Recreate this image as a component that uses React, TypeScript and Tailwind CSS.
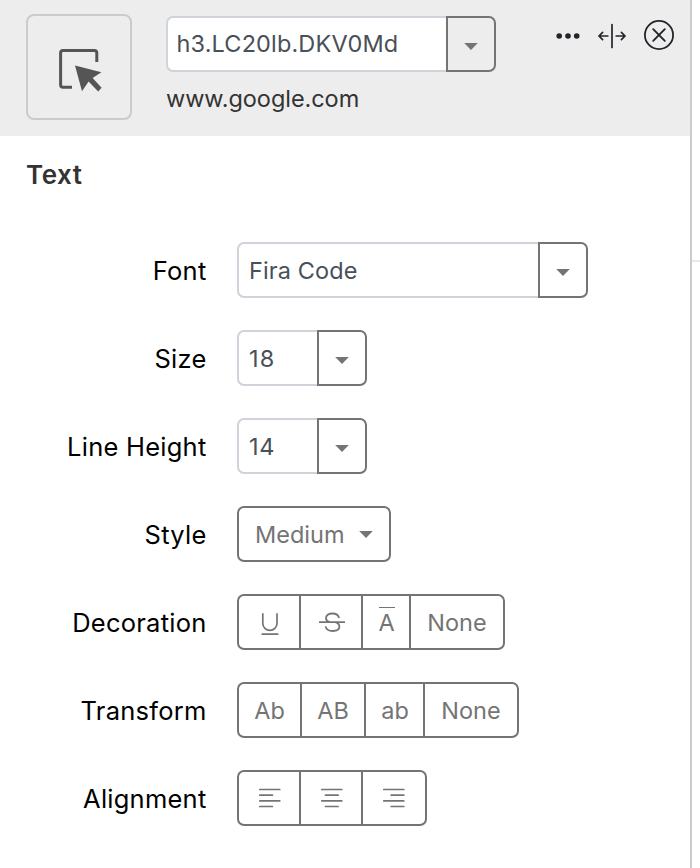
import type { ReactNode } from "react";

function Caret() {
  return (
    <svg width="14" height="7" viewBox="0 0 14 7" className="block shrink-0" fill="#747474">
      <path d="M0.2 0H13.8L7 7Z" />
    </svg>
  );
}

function Combo({ value, width, text }: { value: string; width: string; text: string }) {
  return (
    <div className="flex h-14">
      <div
        className={`flex items-center rounded-l-[7px] border-2 border-r-0 border-[#ced4da] bg-white text-[23.5px] text-[#495057] ${width} ${text}`}
      >
        {value}
      </div>
      <button className="flex w-[50px] items-center justify-center rounded-r-[7px] border-2 border-[#747474] pt-[5px]">
        <Caret />
      </button>
    </div>
  );
}

function Row({ label, children }: { label: string; children: ReactNode }) {
  return (
    <div className="flex h-14 items-center">
      <div className="w-[206.5px] pt-px text-right text-[25.5px] tracking-[0.24px] text-black">{label}</div>
      <div className="ml-[30.5px] flex">{children}</div>
    </div>
  );
}

function Group({ children }: { children: ReactNode }) {
  return (
    <div className="flex h-14 divide-x-2 divide-[#747474] overflow-hidden rounded-[7px] border-2 border-[#747474] text-[23.5px] text-[#747474]">
      {children}
    </div>
  );
}

function Cell({ width, children }: { width: string; children: ReactNode }) {
  return <button className={`flex items-center justify-center pt-px ${width}`}>{children}</button>;
}

function AlignIcon({ d }: { d: string }) {
  return (
    <svg width="24" height="20" viewBox="0 0 24 20" className="mb-[2px]" fill="none" stroke="#747474" strokeWidth="1.7" strokeLinecap="round">
      <path d={d} />
    </svg>
  );
}

export default function App() {
  return (
    <div className="flex h-[868px] w-[700px] overflow-hidden bg-white font-['Inter','Liberation_Sans',sans-serif] leading-none whitespace-nowrap">
      <main className="w-[690px]">
        <header className="flex h-[136px] bg-[#ededed] pl-[26px]">
          <button className="mt-[14px] size-[106px] rounded-[8px] border-2 border-[#cbcbcb]">
            <svg width="102" height="102" viewBox="28 16 102 102" fill="none">
              <path d="M96.8 62V53Q96.8 50.6 94.4 50.6H63Q60.6 50.6 60.6 53V84.8Q60.6 87.2 63 87.2H72" stroke="#555" strokeWidth="3" />
              <path d="M75 65.6L101.4 72.2L92.6 78L101.6 87.8L98.2 91.4L88.6 81.6L82 91.2Z" fill="#555" />
            </svg>
          </button>
          <div className="ml-[34px] pt-4">
            <Combo value="h3.LC20lb.DKV0Md" width="w-[280px]" text="pl-[8.5px] tracking-[0.14px]" />
            <div className="mt-[15px] text-[23.5px] tracking-[-0.06px] text-[#333]">www.google.com</div>
          </div>
          <div className="mt-[18px] ml-[58px] flex">
            <svg width="124" height="34" viewBox="554 18 124 34" fill="none" stroke="#212529" strokeWidth="2" strokeLinecap="round" strokeLinejoin="round">
              <g fill="#212529" stroke="none">
                <circle cx="559.2" cy="36" r="2.8" />
                <circle cx="568" cy="36" r="2.8" />
                <circle cx="576.7" cy="36" r="2.8" />
              </g>
              <path d="M612 24.6V47.4M607.8 36H599M602.6 32.4L599 36L602.6 39.6M616.2 36H625M621.4 32.4L625 36L621.4 39.6" strokeWidth="1.7" />
              <circle cx="659" cy="35" r="14.1" strokeWidth="1.8" />
              <path d="M653.2 29.2L664.8 40.8M664.8 29.2L653.2 40.8" strokeWidth="1.9" />
            </svg>
          </div>
        </header>
        <h2 className="mt-[26px] ml-[26px] h-[25px] text-[26px] leading-[25px] font-semibold tracking-[0.5px] text-[#333]">Text</h2>
        <section className="mt-[55px] flex flex-col gap-8">
          <Row label="Font">
            <Combo value="Fira Code" width="w-[301px]" text="pt-px pl-[10px] tracking-[0.1px]" />
          </Row>
          <Row label="Size">
            <Combo value="18" width="w-[80px]" text="pt-px pl-[10px] tracking-[1.2px]" />
          </Row>
          <Row label="Line Height">
            <Combo value="14" width="w-[80px]" text="pt-px pl-[10px] tracking-[0.8px]" />
          </Row>
          <Row label="Style">
            <button className="flex h-14 w-[154px] items-center justify-between rounded-[7px] border-2 border-[#747474] pr-4 pl-4 text-[23.5px] text-[#747474]">
              <span className="pt-px">Medium</span>
              <Caret />
            </button>
          </Row>
          <Row label="Decoration">
            <Group>
              <Cell width="w-[62px]">
                <svg width="28" height="28" viewBox="0 0 28 28" className="ml-px" fill="none" stroke="#747474" strokeWidth="1.7">
                  <path d="M6.8 4.2V14.6A7.1 6.8 0 0 0 21 14.6V4.2M5.6 25.2H22.4" />
                </svg>
              </Cell>
              <Cell width="w-[62px]">
                <svg width="28" height="28" viewBox="0 0 28 28" className="ml-px" fill="none" stroke="#747474" strokeWidth="1.8">
                  <path d="M21 9C20.4 6 17.8 4.5 14.4 4.5C10.6 4.5 8 6.4 8 9.2C8 11 9 12.2 11.4 13.2M17.2 13.2C20 14 21.4 15.6 21.4 17.6C21.4 20.4 18.6 22 14.8 22C11 22 8.2 20.4 7.6 17.4M1 13.2H27" />
                </svg>
              </Cell>
              <Cell width="w-[48px]">
                <span className="flex flex-col items-center pl-px">
                  <span className="mb-[3px] h-px w-4 bg-[#747474]" />
                  <span className="mb-[3px]">A</span>
                </span>
              </Cell>
              <Cell width="w-[92px]">None</Cell>
            </Group>
          </Row>
          <Row label="Transform">
            <Group>
              <Cell width="w-[63px]">Ab</Cell>
              <Cell width="w-[64px]">AB</Cell>
              <Cell width="w-[59px]">
                <span className="pl-px">ab</span>
              </Cell>
              <Cell width="w-[92px]">None</Cell>
            </Group>
          </Row>
          <Row label="Alignment">
            <Group>
              <Cell width="w-[62px]">
                <AlignIcon d="M2.8 1.5H22.8M2.8 7.2H15.4M2.8 12.9H22.8M2.8 18.5H15.4" />
              </Cell>
              <Cell width="w-[62px]">
                <AlignIcon d="M2.8 1.5H22.8M6.5 7.2H19.1M2.8 12.9H22.8M6.5 18.5H19.1" />
              </Cell>
              <Cell width="w-[62px]">
                <AlignIcon d="M1.8 1.5H21.8M9.2 7.2H21.8M1.8 12.9H21.8M9.2 18.5H21.8" />
              </Cell>
            </Group>
          </Row>
        </section>
      </main>
      <div className="w-[2px] bg-[#cbcbcb]" />
      <div className="mt-[260px] h-[2px] w-2 bg-[#eaeaea]" />
    </div>
  );
}
